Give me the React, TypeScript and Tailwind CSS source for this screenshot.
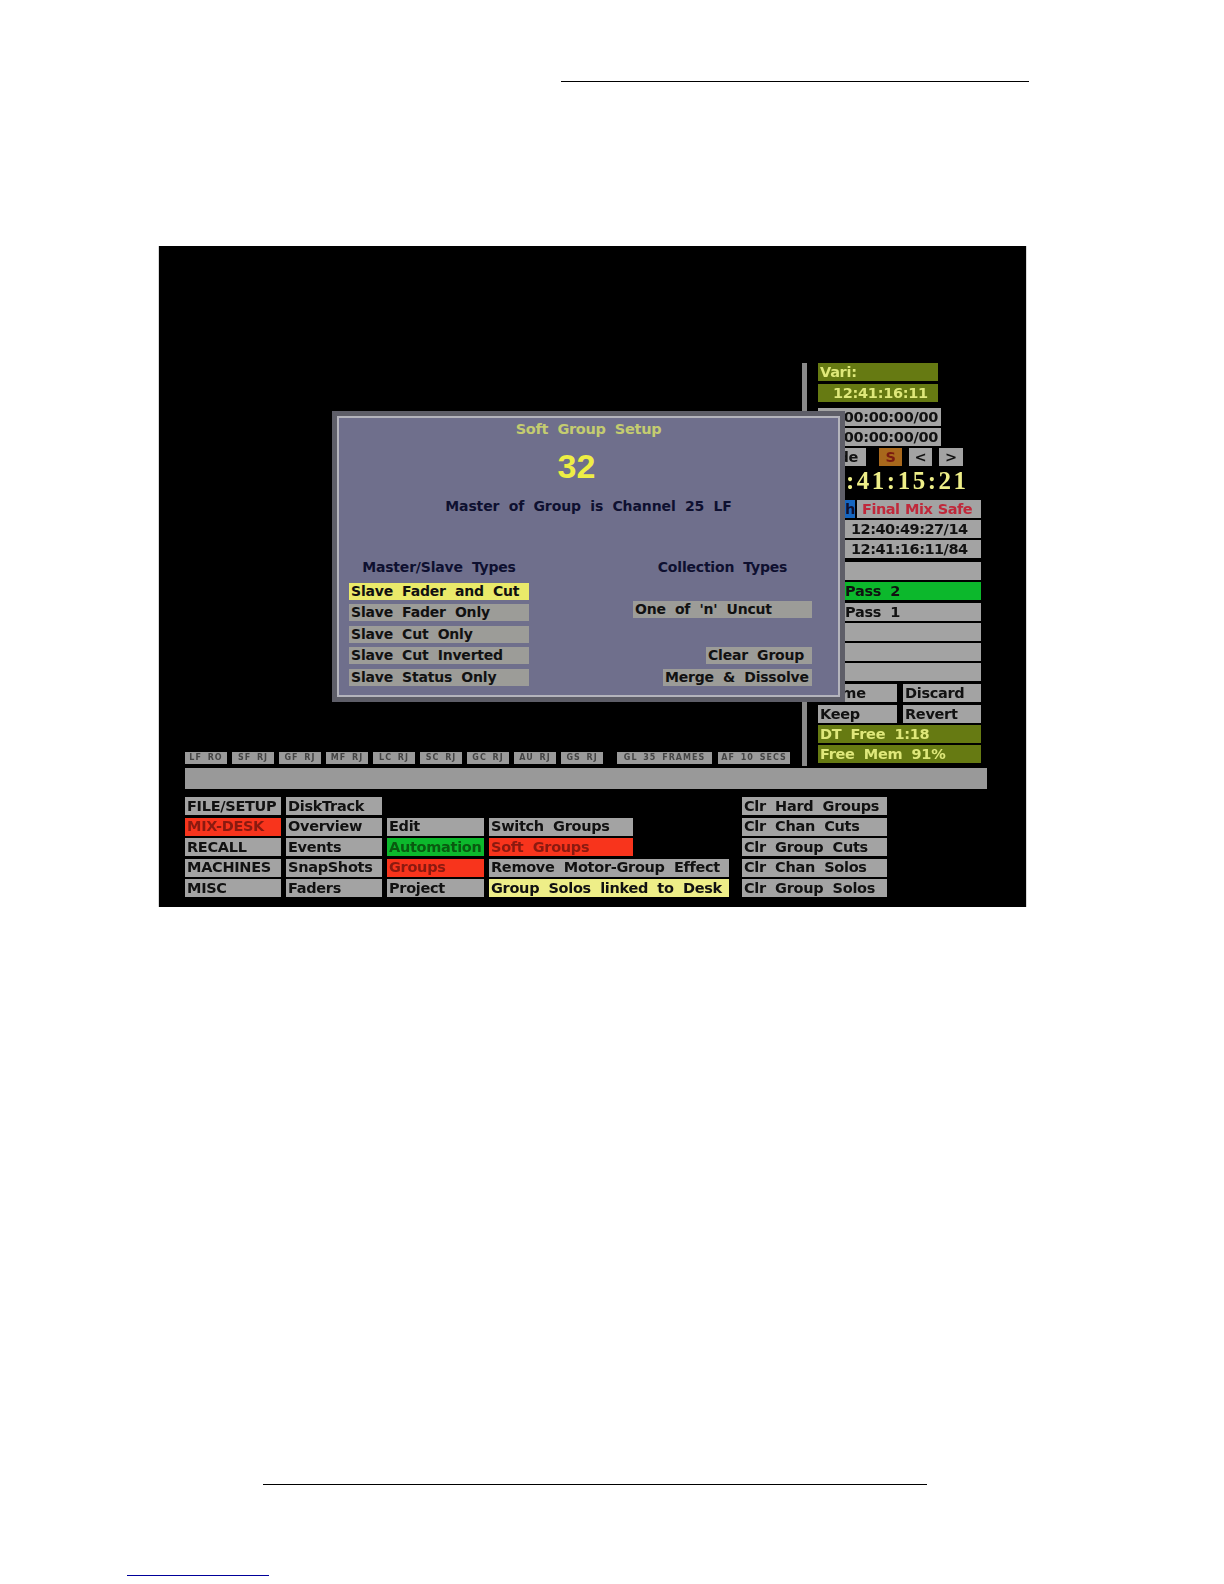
import type { ReactNode } from "react";

const font = { fontFamily: '"DejaVu Sans", sans-serif' };

const Btn = ({
  label,
  className = "bg-[#a3a3a3] text-[#111]",
  pad = "pl-[2px]",
}: {
  label?: ReactNode;
  className?: string;
  pad?: string;
}) => (
  <div className={`h-[18px] flex items-center overflow-hidden whitespace-pre text-[14.5px] leading-none font-bold tracking-[-0.3px] [word-spacing:4.5px] ${pad} ${className}`}>
    {label}
  </div>
);

const chips = ["LF RO", "SF RJ", "GF RJ", "MF RJ", "LC RJ", "SC RJ", "GC RJ", "AU RJ", "GS RJ"];

const Chip = ({ label, w }: { label: string; w: string }) => (
  <div className={`h-3 ${w} bg-[#9a9a9a] text-[#444] text-[8px] font-bold flex items-center justify-center tracking-[1px] [word-spacing:2px] whitespace-pre`}>
    {label}
  </div>
);

const Slave = ({ label, active }: { label: string; active?: boolean }) => (
  <div className={`h-[17px] flex items-center pl-[2px] text-[14px] font-bold tracking-[-0.2px] [word-spacing:4.5px] whitespace-pre text-[#111] ${active ? "bg-[#eaea6a]" : "bg-[#9c9c98]"}`}>
    {label}
  </div>
);

export default function App() {
  return (
    <div className="w-[1224px] h-[1584px] bg-white flex flex-col" style={font}>
      <div className="ml-[561px] mt-[81px] w-[468px] h-px bg-black" />

      {/* desk screen */}
      <div className="relative ml-[158px] mt-[164px] w-[869px] h-[661px] shrink-0 bg-black border-x border-[#d8d8d8]">
        <div className="h-full blur-[0.6px]">
          <div className="flex h-[520px] items-end pl-[26px]">
            <div className="flex gap-[5px] mb-[2px] w-[617px]">
              {chips.map((c) => (
                <Chip key={c} label={c} w="w-[42px]" />
              ))}
              <Chip label="GL 35 FRAMES" w="w-[95px] ml-[9px]" />
              <Chip label="AF 10 SECS" w="w-[72px] ml-px" />
            </div>
            <div className="w-[5px] h-[403px] bg-[#8a8a8a]" />
            <div className="ml-[11px] mb-[3px] w-[163px] flex flex-col">
              <Btn label="Vari:" className="w-[120px] bg-[#667a12] text-[#dfe87a]" />
              <Btn label="12:41:16:11" pad="pl-[15px]" className="w-[120px] mt-[3px] bg-[#667a12] text-[#dfe87a]" />
              <Btn label="00:00:00/00" pad="justify-end pr-[3px]" className="w-[123px] mt-[6px] bg-[#a3a3a3] text-[#111]" />
              <Btn label="00:00:00/00" pad="justify-end pr-[3px]" className="w-[123px] mt-[2px] bg-[#a3a3a3] text-[#111]" />
              <div className="flex mt-[2px] gap-[7px]">
                <Btn label="de" pad="justify-end pr-[8px]" className="w-[48px] bg-[#a3a3a3] text-[#111]" />
                <Btn label="S" pad="justify-center" className="w-[23px] ml-[6px] bg-[#a8681c] text-[#7a1a10]" />
                <Btn label="<" pad="justify-center" className="w-[23px] bg-[#a3a3a3] text-[#111]" />
                <Btn label=">" pad="justify-center" className="w-[24px] bg-[#a3a3a3] text-[#111]" />
              </div>
              <div className="h-[34px] pb-[4px] -ml-[2px] flex items-center text-[25px] font-bold text-[#eeee88] tracking-[2.5px] whitespace-pre" style={{ fontFamily: '"Liberation Serif", serif' }}>
                12:41:15:21
              </div>
              <div className="flex gap-[2px]">
                <Btn label="Auth" pad="justify-end" className="w-[37px] bg-[#1666c0] text-[#0e1030]" />
                <Btn label={<span className="tracking-[-0.5px] [word-spacing:1px]">Final Mix Safe</span>} pad="pl-[5px]" className="w-[124px] bg-[#a3a3a3] text-[#c0283a]" />
              </div>
              <Btn label={<span className="tracking-[-0.5px]">12:40:49:27/14</span>} pad="pl-[33px]" className="mt-[2px] bg-[#a3a3a3] text-[#111]" />
              <Btn label={<span className="tracking-[-0.5px]">12:41:16:11/84</span>} pad="pl-[33px]" className="mt-[2px] bg-[#a3a3a3] text-[#111]" />
              <Btn className="mt-[4px] bg-[#a3a3a3]" />
              <Btn label="Pass 2" pad="pl-[27px]" className="mt-[2px] bg-[#0cb82c] text-[#111]" />
              <Btn label="Pass 1" pad="pl-[27px]" className="mt-[3px] bg-[#a3a3a3] text-[#111]" />
              <Btn className="mt-[2px] bg-[#a3a3a3]" />
              <Btn className="mt-[2px] bg-[#a3a3a3]" />
              <Btn className="mt-[2px] bg-[#a3a3a3]" />
              <div className="flex gap-[6px] mt-[3px]">
                <Btn label="Name" className="w-[79px] bg-[#a3a3a3] text-[#111]" />
                <Btn label="Discard" className="w-[78px] bg-[#a3a3a3] text-[#111]" />
              </div>
              <div className="flex gap-[6px] mt-[3px]">
                <Btn label="Keep" className="w-[79px] bg-[#a3a3a3] text-[#111]" />
                <Btn label="Revert" className="w-[78px] bg-[#a3a3a3] text-[#111]" />
              </div>
              <Btn label="DT Free 1:18" className="mt-[2px] bg-[#667a12] text-[#dfe87a]" />
              <Btn label="Free Mem 91%" className="mt-[2px] bg-[#667a12] text-[#dfe87a]" />
            </div>
          </div>

          <div className="ml-[26px] mt-[2px] w-[802px] h-[21px] bg-[#999]" />

          {/* bottom menu */}
          <div className="ml-[26px] mt-[8px] flex">
            <div className="w-[96px] flex flex-col gap-[2.5px]">
              <Btn label="FILE/SETUP" />
              <Btn label="MIX-DESK" className="bg-[#f8341c] text-[#8a1a10]" />
              <Btn label="RECALL" />
              <Btn label="MACHINES" />
              <Btn label="MISC" />
            </div>
            <div className="w-[96px] ml-[5px] flex flex-col gap-[2.5px]">
              <Btn label="DiskTrack" />
              <Btn label="Overview" />
              <Btn label="Events" />
              <Btn label="SnapShots" />
              <Btn label="Faders" />
            </div>
            <div className="w-[97px] ml-[5px] mt-[20.5px] flex flex-col gap-[2.5px]">
              <Btn label="Edit" />
              <Btn label="Automation" className="bg-[#0cb82c] text-[#0a5a10]" />
              <Btn label="Groups" className="bg-[#f8341c] text-[#8a1a10]" />
              <Btn label="Project" />
            </div>
            <div className="w-[240px] ml-[5px] mt-[20.5px] flex flex-col gap-[2.5px]">
              <Btn label="Switch Groups" className="w-[144px] bg-[#a3a3a3] text-[#111]" />
              <Btn label="Soft Groups" className="w-[144px] bg-[#f8341c] text-[#8a1a10]" />
              <Btn label="Remove Motor-Group Effect" />
              <Btn label="Group Solos linked to Desk" className="bg-[#eeee88] text-[#111]" />
            </div>
            <div className="w-[145px] ml-[13px] flex flex-col gap-[2.5px]">
              <Btn label="Clr Hard Groups" />
              <Btn label="Clr Chan Cuts" />
              <Btn label="Clr Group Cuts" />
              <Btn label="Clr Chan Solos" />
              <Btn label="Clr Group Solos" />
            </div>
          </div>

          {/* dialog */}
          <div className="absolute left-[173px] top-[165px] w-[513px] h-[291px] border-[5px] border-[#5e5e68] bg-[#6f6f8c]">
            <div className="h-full border-2 border-[#b4b4bc] text-[#0e1030] font-bold">
              <div className="text-center pt-[1px] text-[14.5px] text-[#c4cc70] tracking-[-0.3px] [word-spacing:4.5px] whitespace-pre">Soft Group Setup</div>
              <div className="text-center mt-[7px] text-[34px] leading-[36px] text-[#eeee44] pr-[24px]" style={{ fontFamily: '"Liberation Sans", sans-serif' }}>32</div>
              <div className="text-center mt-[12px] text-[14px] tracking-[-0.1px] [word-spacing:4.5px] whitespace-pre">Master of Group is Channel 25 LF</div>
              <div className="flex justify-between mt-[40px] pl-[10px] pr-[26px]">
                <div className="w-[180px] flex flex-col">
                  <div className="text-[14px] text-center h-[20px] tracking-[-0.2px] [word-spacing:4.5px] whitespace-pre">Master/Slave Types</div>
                  <div className="mt-[6px] flex flex-col gap-[4.5px]">
                    <Slave label="Slave Fader and Cut" active />
                    <Slave label="Slave Fader Only" />
                    <Slave label="Slave Cut Only" />
                    <Slave label="Slave Cut Inverted" />
                    <Slave label="Slave Status Only" />
                  </div>
                </div>
                <div className="w-[179px] flex flex-col items-end">
                  <div className="w-full text-[14px] text-center h-[20px] tracking-[-0.2px] [word-spacing:4.5px] whitespace-pre">Collection Types</div>
                  <div className="w-full mt-[24px]"><Slave label="One of 'n' Uncut" /></div>
                  <div className="w-[106px] mt-[29px]"><Slave label="Clear Group" /></div>
                  <div className="w-[149px] mt-[5px]"><Slave label="Merge & Dissolve" /></div>
                </div>
              </div>
            </div>
          </div>
        </div>
      </div>

      <div className="ml-[263px] mt-[577px] w-[664px] h-px bg-black" />
      <div className="ml-[127px] mt-[90px] w-[142px] h-px bg-[#00009a]" />
    </div>
  );
}
